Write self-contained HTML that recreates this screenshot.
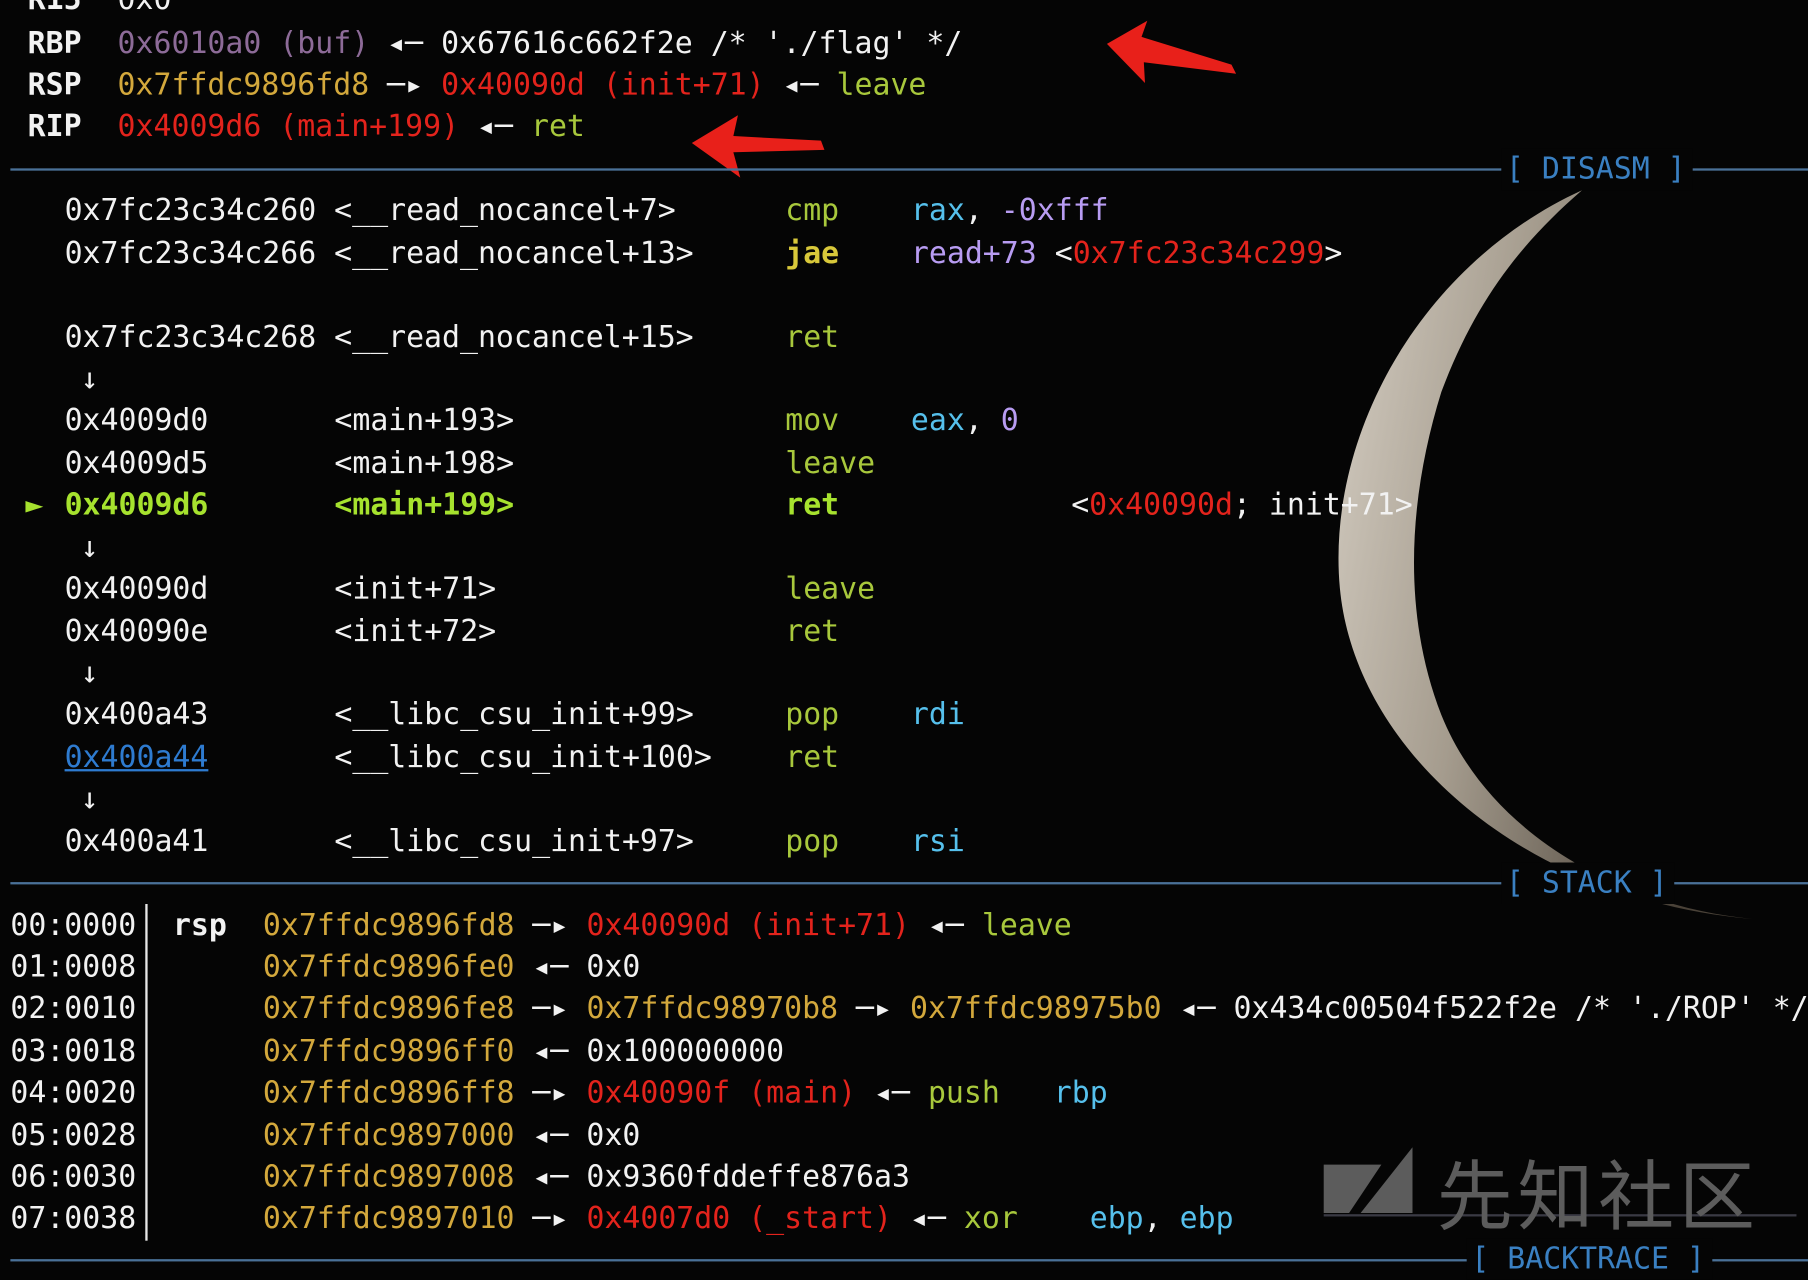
<!DOCTYPE html>
<html><head><meta charset="utf-8"><style>
html,body{margin:0;padding:0;background:#050505;width:1808px;height:1264px;overflow:hidden}
#s{position:absolute;left:0;top:0;width:1568px;height:1096px;transform:scale(1.15306);transform-origin:0 0;font-family:"DejaVu Sans Mono","Liberation Mono",monospace;font-size:25.9px;color:#f2f2f2}
.l{position:absolute;white-space:pre;line-height:36px;height:36px}
.w{color:#f2f2f2}.b{font-weight:bold}
.y{color:#d3a83c}.r{color:#e3231c}.g{color:#a8c83c}.p{color:#8d6b98}.c{color:#56c0ec}.v{color:#b89cf2}
.G{color:#a6e22e;font-weight:bold}
.u{color:#2e7bd0;text-decoration:underline}
.hr{position:absolute;left:9px;right:0;height:2px;background:#4a7198}
.hl{position:absolute;background:#050505;color:#3a80c2;white-space:pre;line-height:36px;padding:0 6px 0 4px}
</style></head><body><div id="s">
<svg style="position:absolute;left:0;top:0" width="1568" height="1096">
<defs><linearGradient id="mg" x1="0" x2="1" y1="0" y2="0.3"><stop offset="0" stop-color="#d6cfc4"/><stop offset="0.45" stop-color="#a59c8e"/><stop offset="1" stop-color="#4a4238"/></linearGradient></defs>
<path d="M1372 165 C1230 230 1150 380 1162 510 C1175 650 1320 780 1520 797 C1400 785 1290 720 1250 620 C1215 530 1222 430 1250 340 C1280 260 1320 210 1372 165 Z" fill="url(#mg)"/>
<polygon points="960,38 995,18 990,32 1068,56 1072,64 992,54 993,72" fill="#e8201a"/>
<polygon points="600,124 640,100 636,118 712,122 715,130 636,132 642,154" fill="#e8201a"/>
<polygon points="1148,1010 1198,1010 1170,1052 1148,1052" fill="#5c5c5c"/>
<polygon points="1225,995 1225,1052 1180,1052" fill="#5c5c5c"/>
<rect x="1148" y="1053" width="410" height="2" fill="#3a3a44"/>
</svg>
<div class="l" style="left:1246px;top:998px;font-family:'Noto Sans CJK SC',sans-serif;font-size:66px;line-height:70px;height:70px;color:#5c5c5c;letter-spacing:4px">先知社区</div>

<div class="l b" style="left:24px;top:-18px">R15  <span style="font-weight:normal">0x0</span></div>
<div class="l" style="left:24px;top:20px"><span class="b">RBP</span>  <span class="p">0x6010a0 (buf)</span> ◂─ 0x67616c662f2e /* './flag' */</div>
<div class="l" style="left:24px;top:56px"><span class="b">RSP</span>  <span class="y">0x7ffdc9896fd8</span> ─▸ <span class="r">0x40090d (init+71)</span> ◂─ <span class="g">leave</span></div>
<div class="l" style="left:24px;top:92px"><span class="b">RIP</span>  <span class="r">0x4009d6 (main+199)</span> ◂─ <span class="g">ret</span></div>

<div class="hr" style="top:146px"></div>
<div class="hl" style="left:1302px;top:129px">[ DISASM ]</div>

<div class="l" style="left:56px;top:165px">0x7fc23c34c260 &lt;__read_nocancel+7&gt;</div><div class="l g" style="left:681px;top:165px">cmp</div><div class="l" style="left:790px;top:165px"><span class="c">rax</span>, <span class="v">-0xfff</span></div>
<div class="l" style="left:56px;top:202px">0x7fc23c34c266 &lt;__read_nocancel+13&gt;</div><div class="l b" style="left:681px;top:202px;color:#d8c83a">jae</div><div class="l" style="left:790px;top:202px"><span class="v">read+73</span> &lt;<span class="r">0x7fc23c34c299</span>&gt;</div>
<div class="l" style="left:56px;top:275px">0x7fc23c34c268 &lt;__read_nocancel+15&gt;</div><div class="l g" style="left:681px;top:275px">ret</div>
<div class="l" style="left:70px;top:311px">↓</div>
<div class="l" style="left:56px;top:347px">0x4009d0</div><div class="l" style="left:290px;top:347px">&lt;main+193&gt;</div><div class="l g" style="left:681px;top:347px">mov</div><div class="l" style="left:790px;top:347px"><span class="c">eax</span>, <span class="v">0</span></div>
<div class="l" style="left:56px;top:384px">0x4009d5</div><div class="l" style="left:290px;top:384px">&lt;main+198&gt;</div><div class="l g" style="left:681px;top:384px">leave</div>
<div class="l G" style="left:22px;top:420px">►</div><div class="l G" style="left:56px;top:420px">0x4009d6</div><div class="l G" style="left:290px;top:420px">&lt;main+199&gt;</div><div class="l G" style="left:681px;top:420px">ret</div><div class="l" style="left:929px;top:420px">&lt;<span class="r">0x40090d</span>; init+71&gt;</div>
<div class="l" style="left:70px;top:457px">↓</div>
<div class="l" style="left:56px;top:493px">0x40090d</div><div class="l" style="left:290px;top:493px">&lt;init+71&gt;</div><div class="l g" style="left:681px;top:493px">leave</div>
<div class="l" style="left:56px;top:530px">0x40090e</div><div class="l" style="left:290px;top:530px">&lt;init+72&gt;</div><div class="l g" style="left:681px;top:530px">ret</div>
<div class="l" style="left:70px;top:566px">↓</div>
<div class="l" style="left:56px;top:602px">0x400a43</div><div class="l" style="left:290px;top:602px">&lt;__libc_csu_init+99&gt;</div><div class="l g" style="left:681px;top:602px">pop</div><div class="l c" style="left:790px;top:602px">rdi</div>
<div class="l u" style="left:56px;top:639px">0x400a44</div><div class="l" style="left:290px;top:639px">&lt;__libc_csu_init+100&gt;</div><div class="l g" style="left:681px;top:639px">ret</div>
<div class="l" style="left:70px;top:675px">↓</div>
<div class="l" style="left:56px;top:712px">0x400a41</div><div class="l" style="left:290px;top:712px">&lt;__libc_csu_init+97&gt;</div><div class="l g" style="left:681px;top:712px">pop</div><div class="l c" style="left:790px;top:712px">rsi</div>

<div class="hr" style="top:765px"></div>
<div class="hl" style="left:1302px;top:748px">[ STACK ]</div>
<div style="position:absolute;left:126px;top:784px;width:2px;height:292px;background:#e8e8e8"></div>

<div class="l" style="left:9px;top:785px">00:0000</div><div class="l b" style="left:150px;top:785px">rsp</div><div class="l" style="left:228px;top:785px"><span class="y">0x7ffdc9896fd8</span> ─▸ <span class="r">0x40090d (init+71)</span> ◂─ <span class="g">leave</span></div>
<div class="l" style="left:9px;top:821px">01:0008</div><div class="l" style="left:228px;top:821px"><span class="y">0x7ffdc9896fe0</span> ◂─ 0x0</div>
<div class="l" style="left:9px;top:857px">02:0010</div><div class="l" style="left:228px;top:857px"><span class="y">0x7ffdc9896fe8</span> ─▸ <span class="y">0x7ffdc98970b8</span> ─▸ <span class="y">0x7ffdc98975b0</span> ◂─ 0x434c00504f522f2e /* './ROP' */</div>
<div class="l" style="left:9px;top:894px">03:0018</div><div class="l" style="left:228px;top:894px"><span class="y">0x7ffdc9896ff0</span> ◂─ 0x100000000</div>
<div class="l" style="left:9px;top:930px">04:0020</div><div class="l" style="left:228px;top:930px"><span class="y">0x7ffdc9896ff8</span> ─▸ <span class="r">0x40090f (main)</span> ◂─ <span class="g">push</span>   <span class="c">rbp</span></div>
<div class="l" style="left:9px;top:967px">05:0028</div><div class="l" style="left:228px;top:967px"><span class="y">0x7ffdc9897000</span> ◂─ 0x0</div>
<div class="l" style="left:9px;top:1003px">06:0030</div><div class="l" style="left:228px;top:1003px"><span class="y">0x7ffdc9897008</span> ◂─ 0x9360fddeffe876a3</div>
<div class="l" style="left:9px;top:1039px">07:0038</div><div class="l" style="left:228px;top:1039px"><span class="y">0x7ffdc9897010</span> ─▸ <span class="r">0x4007d0 (_start)</span> ◂─ <span class="g">xor</span>    <span class="c">ebp</span>, <span class="c">ebp</span></div>

<div class="hr" style="top:1092px"></div>
<div class="hl" style="left:1272px;top:1074px">[ BACKTRACE ]</div>
</div></body></html>
